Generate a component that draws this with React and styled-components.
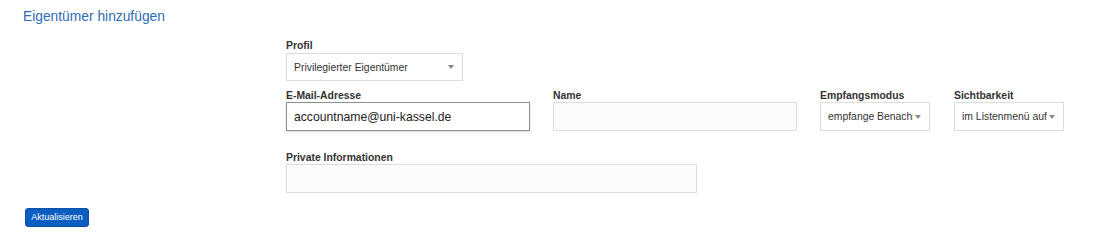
import React from 'react'
import styled, { createGlobalStyle } from 'styled-components'

const GlobalStyle = createGlobalStyle`
  html, body {
    margin: 0;
    padding: 0;
    background: #fff;
    font-family: "Liberation Sans", Arial, sans-serif;
  }
`

const Page = styled.div`
  width: 1110px;
  height: 249px;
  padding: 9px 0 0 23px;
  box-sizing: border-box;
`

const Title = styled.h2`
  margin: 0;
  font-size: 13.8px;
  line-height: 16px;
  font-weight: normal;
  color: #2d6cb4;
`

const Form = styled.div`
  margin: 15px 0 0 263px;
  display: flex;
  flex-direction: column;
`

const Row = styled.div`
  display: flex;
  gap: ${({ gap }) => gap || 23}px;
  margin-top: ${({ top }) => top || 0}px;
`

const Field = styled.div`
  display: flex;
  flex-direction: column;
  width: ${({ w }) => w}px;
  margin-left: ${({ shift }) => shift || 0}px;
`

const Label = styled.label`
  font-size: 10.4px;
  line-height: 12px;
  font-weight: bold;
  color: #333;
  margin-bottom: ${({ mb }) => (mb == null ? 1 : mb)}px;
`

const SelectBox = styled.div`
  display: flex;
  align-items: center;
  height: ${({ h }) => h || 28}px;
  box-sizing: border-box;
  border: 1px solid #ddd;
  background: #fff;
  padding: 0 8px 0 7px;
  font-size: 10.4px;
  color: #333;
`

const SelectText = styled.span`
  flex: 1;
  overflow: hidden;
  white-space: nowrap;
`

const Arrow = styled.span`
  width: 0;
  height: 0;
  margin-left: 2px;
  border-left: 3px solid transparent;
  border-right: 3px solid transparent;
  border-top: 4px solid #888;
  flex-shrink: 0;
`

const Input = styled.div`
  height: 29px;
  box-sizing: border-box;
  border: 1px solid ${({ active }) => (active ? '#8f8f8f' : '#ddd')};
  background: ${({ active }) => (active ? '#fff' : '#fcfcfc')};
  box-shadow: ${({ active }) => (active ? '0 1px 2px rgba(0,0,0,0.15)' : 'none')};
  display: flex;
  align-items: center;
  padding: 0 7px;
  font-size: 12.2px;
  color: #222;
`

const Button = styled.button`
  margin: 15px 0 0 2px;
  width: 64px;
  height: 19px;
  padding: 0;
  border: 1px solid #0950a6;
  border-radius: 3px;
  background: #0b5dbf;
  color: #fff;
  font-family: "Liberation Sans", Arial, sans-serif;
  font-size: 9px;
  line-height: 17px;
`

function Select({ text, h }) {
  return (
    <SelectBox h={h}>
      <SelectText>{text}</SelectText>
      <Arrow />
    </SelectBox>
  )
}

export default function App() {
  return (
    <Page>
      <GlobalStyle />
      <Title>Eigentümer hinzufügen</Title>
      <Form>
        <Row>
          <Field w={177}>
            <Label>Profil</Label>
            <Select text="Privilegierter Eigentümer" />
          </Field>
        </Row>
        <Row top={9}>
          <Field w={244}>
            <Label mb={0}>E-Mail-Adresse</Label>
            <Input active>accountname@uni-kassel.de</Input>
          </Field>
          <Field w={244}>
            <Label mb={0}>Name</Label>
            <Input />
          </Field>
          <Field w={110}>
            <Label mb={0}>Empfangsmodus</Label>
            <Select h={29} text="empfange Benachrichtigungen" />
          </Field>
          <Field w={110} shift={1}>
            <Label mb={0}>Sichtbarkeit</Label>
            <Select h={29} text="im Listenmenü aufgeführt" />
          </Field>
        </Row>
        <Row top={21}>
          <Field w={411}>
            <Label mb={0}>Private Informationen</Label>
            <Input />
          </Field>
        </Row>
      </Form>
      <Button>Aktualisieren</Button>
    </Page>
  )
}
